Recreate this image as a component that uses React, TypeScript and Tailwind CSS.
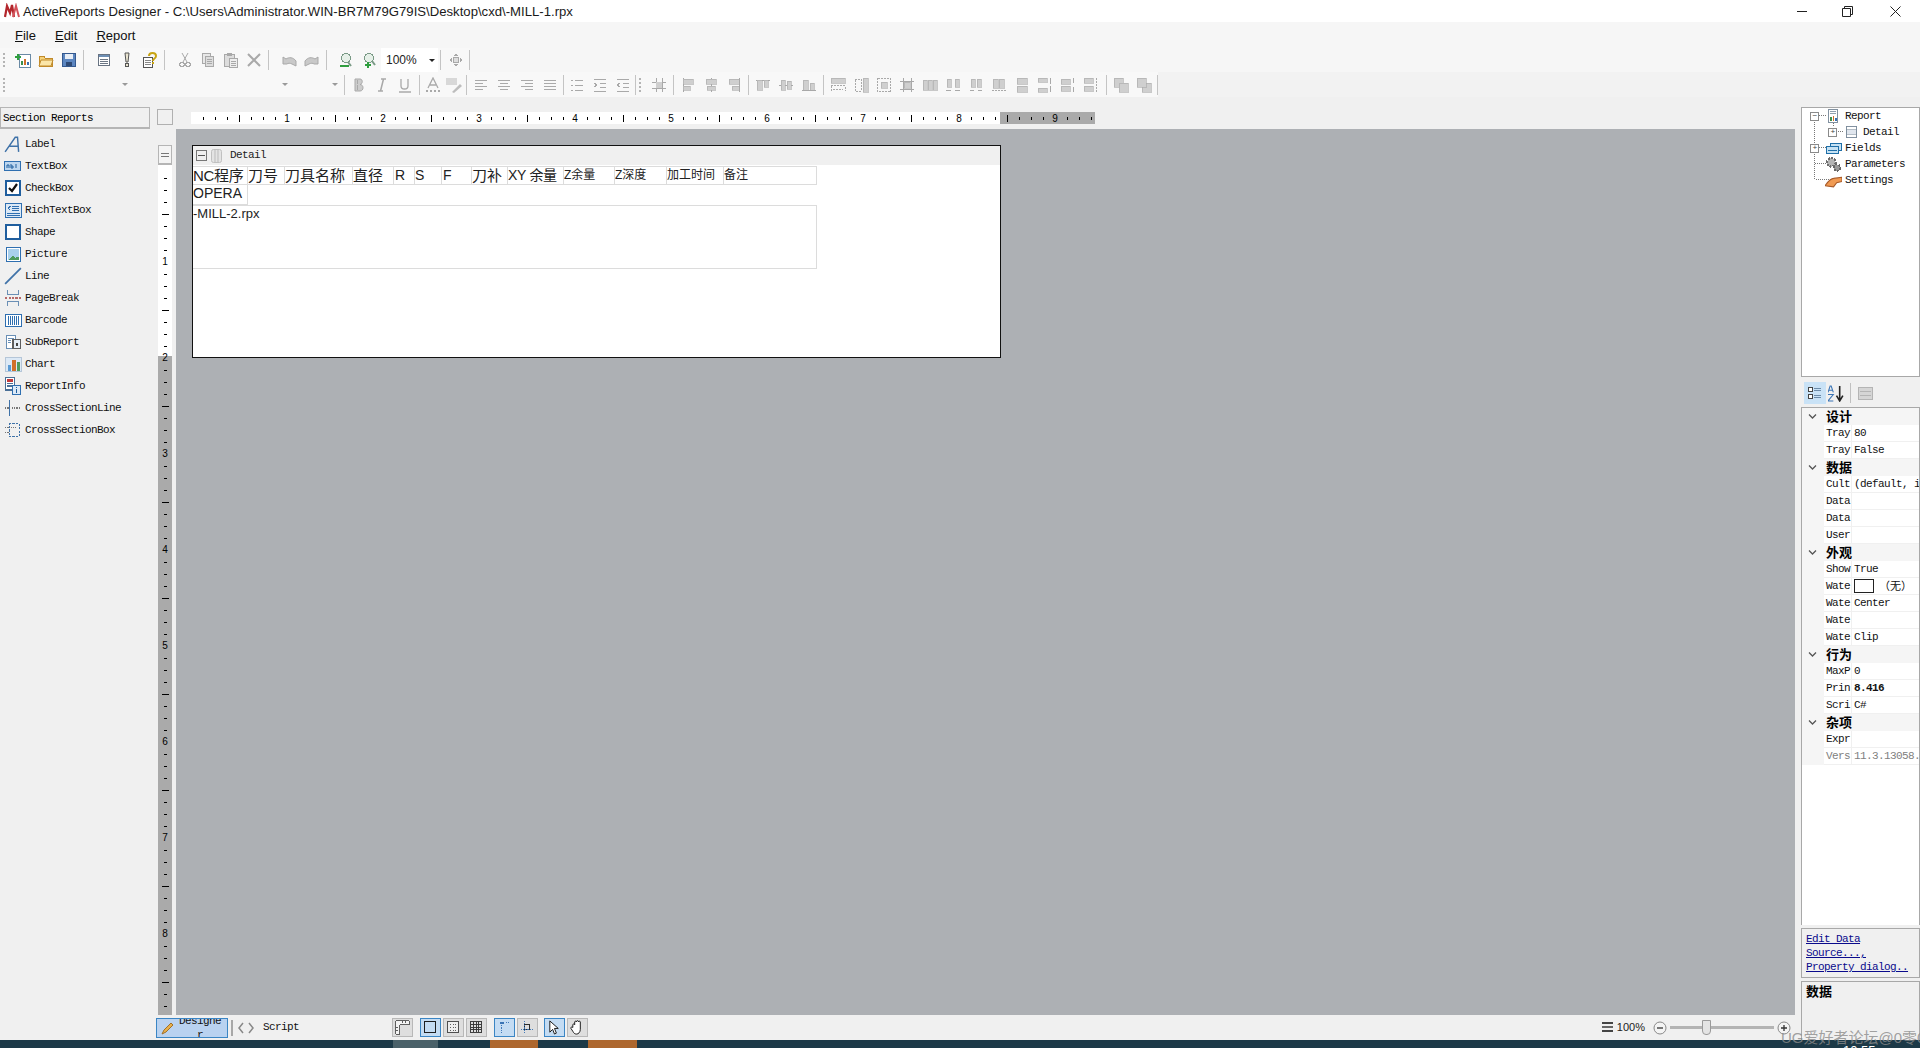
import React from "react";

const mono = "font-['Liberation_Mono','Noto_Sans_CJK_SC',monospace] text-[11px] tracking-[-0.6px]";
const sans = "font-['Liberation_Sans','Noto_Sans_CJK_SC',sans-serif]";
const g = "#a9a9a9"; // disabled stroke
const lg = "#cfcfcf";

type Kids = { children: React.ReactNode };

function Ic({ children, s = 16 }: Kids & { s?: number }) {
  return (
    <svg width={s} height={s} viewBox="0 0 16 16" fill="none" shapeRendering="crispEdges">
      {children}
    </svg>
  );
}

function Bars({ d }: { d: number[][] }) {
  return (
    <>
      {d.map(([a, b, c, e], i) => (
        <rect key={i} x={a} y={b} width={c} height={e} fill={lg} stroke={g} strokeWidth="0.6" />
      ))}
    </>
  );
}

const toolbarIcons: Record<string, React.ReactNode> = {
  new: (
    <Ic>
      <rect x="4" y="2" width="11" height="13" fill="#fff" stroke="#6a8aa5" />
      <rect x="6" y="9" width="2" height="4" fill="#3c8f4c" />
      <rect x="9" y="7" width="2" height="6" fill="#d0702a" />
      <rect x="12" y="10" width="2" height="3" fill="#3a6fb0" />
      <path d="M0 5h6M3 2v6" stroke="#2f9e3f" strokeWidth="2" />
    </Ic>
  ),
  open: (
    <Ic>
      <path d="M1 4h5l1 2h7v8H1z" fill="#f5d27a" stroke="#c08a2a" />
      <path d="M3 8h12l-2 6H1z" fill="#fbe6a8" stroke="#c08a2a" shapeRendering="auto" />
    </Ic>
  ),
  save: (
    <Ic>
      <rect x="1.500" y="1.500" width="13" height="13" fill="#5c86c0" stroke="#34598f" />
      <rect x="4" y="2" width="8" height="5" fill="#e8eef6" />
      <rect x="5" y="10" width="6" height="4" fill="#2f4a75" />
    </Ic>
  ),
  props: (
    <Ic>
      <rect x="2.500" y="2.500" width="11" height="11" fill="#fff" stroke="#687382" />
      <rect x="3" y="3" width="10" height="2" fill="#6d8fb5" />
      <path d="M4 7h8M4 9h8M4 11h8" stroke="#6b7684" />
    </Ic>
  ),
  warn: (
    <Ic>
      <path d="M6 1h4l-1 9H7z" fill="#e9e4d0" stroke="#555" shapeRendering="auto" />
      <circle cx="8" cy="13" r="1.700" fill="#e9e4d0" stroke="#555" />
    </Ic>
  ),
  help: (
    <Ic>
      <rect x="1.500" y="5.500" width="9" height="10" fill="#fff" stroke="#555" />
      <path d="M3 8h6M3 10h6M3 12h6" stroke="#888" />
      <path d="M7 4c0-4 7-4 7 0 0 3-3 2-3 5" stroke="#c8a412" strokeWidth="2" shapeRendering="auto" />
      <rect x="10" y="10" width="2" height="2" fill="#c8a412" />
    </Ic>
  ),
  cut: (
    <Ic>
      <path d="M5 1l5 9M11 1L6 10" stroke={g} shapeRendering="auto" />
      <circle cx="5" cy="12.500" r="2.200" stroke={g} />
      <circle cx="11" cy="12.500" r="2.200" stroke={g} />
    </Ic>
  ),
  copy: (
    <Ic>
      <rect x="2.500" y="1.500" width="8" height="10" fill="#e8e8e8" stroke={g} />
      <rect x="5.500" y="4.500" width="8" height="10" fill="#ddd" stroke={g} />
      <path d="M7 7h5M7 9h5M7 11h5" stroke={g} />
    </Ic>
  ),
  paste: (
    <Ic>
      <rect x="1.500" y="2.500" width="10" height="12" fill="#ddd" stroke={g} />
      <rect x="4" y="1" width="5" height="3" fill={g} />
      <rect x="6.500" y="6.500" width="8" height="9" fill="#eee" stroke={g} />
      <path d="M8 9h5M8 11h5M8 13h5" stroke={g} />
    </Ic>
  ),
  del: (
    <Ic>
      <path d="M2 2l12 12M14 2L2 14" stroke={g} strokeWidth="2" shapeRendering="auto" />
    </Ic>
  ),
  undo: (
    <Ic>
      <path d="M2 12V5l3 2c3-2 7-2 10 2v5l-4-2c-2-1-4-1-5 0z" fill="#c9c9c9" stroke={g} shapeRendering="auto" />
    </Ic>
  ),
  redo: (
    <Ic>
      <path d="M14 12V5l-3 2C8 5 4 5 1 9v5l4-2c2-1 4-1 5 0z" fill="#c9c9c9" stroke={g} shapeRendering="auto" />
    </Ic>
  ),
  zoomOut: (
    <Ic>
      <circle cx="7" cy="6" r="4.500" fill="#e6f0e8" stroke="#7a9a86" />
      <path d="M9 10l3 4" stroke="#7a9a86" strokeWidth="2" shapeRendering="auto" />
      <path d="M1 14h9" stroke="#2f9e3f" strokeWidth="2" />
    </Ic>
  ),
  zoomIn: (
    <Ic>
      <circle cx="7" cy="6" r="4.500" fill="#e6f0e8" stroke="#7a9a86" />
      <path d="M3 13h6M6 10v5.500" stroke="#2f9e3f" strokeWidth="2" />
      <path d="M10 9l3 4" stroke="#7a9a86" strokeWidth="2" shapeRendering="auto" />
    </Ic>
  ),
  move: (
    <Ic>
      <rect x="5.500" y="5.500" width="5" height="5" fill="#ddd" stroke={g} />
      <path d="M8 1l2 3H6zM8 15l2-3H6zM1 8l3-2v4zM15 8l-3-2v4z" fill={g} />
    </Ic>
  ),
  bold: (
    <Ic>
      <path d="M4 2h5c3 0 3 5 0 5.500 4 0 4 6.500 0 6.500H4z M6.500 3v4M6.500 8v5" fill="#ccc" stroke={g} shapeRendering="auto" />
    </Ic>
  ),
  italic: (
    <Ic>
      <path d="M7 2h5M4 14h5M9.500 2l-3 12" stroke={g} strokeWidth="1.500" shapeRendering="auto" />
    </Ic>
  ),
  under: (
    <Ic>
      <path d="M4 2v7c0 4 7 4 7 0V2M2 15h12" stroke={g} strokeWidth="1.300" shapeRendering="auto" />
    </Ic>
  ),
  fcolor: (
    <Ic>
      <path d="M3 11l5-10 5 10M5 8h6" stroke={g} strokeWidth="1.300" shapeRendering="auto" />
      <path d="M1 14h2M5 14h2M9 14h2M13 14h2" stroke={g} strokeWidth="2" />
    </Ic>
  ),
  abc: (
    <Ic>
      <rect x="0" y="1" width="11" height="7" fill="#d8d8d8" />
      <path d="M6 15l8-8 2 2-8 7z" fill="#bdbdbd" shapeRendering="auto" />
    </Ic>
  ),
  aL: <Ic><path d="M2 3h12M2 6h8M2 9h12M2 12h8" stroke={g} /></Ic>,
  aC: <Ic><path d="M2 3h12M4 6h8M2 9h12M4 12h8" stroke={g} /></Ic>,
  aR: <Ic><path d="M2 3h12M6 6h8M2 9h12M6 12h8" stroke={g} /></Ic>,
  aJ: <Ic><path d="M2 3h12M2 6h12M2 9h12M2 12h12" stroke={g} /></Ic>,
  list: <Ic><path d="M2 3h2M2 8h2M2 13h2M6 3h8M6 8h8M6 13h8" stroke={g} /></Ic>,
  indent: <Ic><path d="M2 2h12M8 6h6M8 10h6M2 14h12M2 6l3 2-3 2" stroke={g} /></Ic>,
  outdent: <Ic><path d="M2 2h12M8 6h6M8 10h6M2 14h12M5 6L2 8l3 2" stroke={g} /></Ic>,
  gridAl: <Ic><path d="M1 5h14M1 11h14M5 1v14M11 1v14" stroke={g} /><rect x="5" y="5" width="6" height="6" fill={lg} /></Ic>,
  leftAl: <Ic><path d="M3 1v14" stroke={g} /><Bars d={[[3, 2, 10, 5], [3, 9, 7, 4]]} /></Ic>,
  ctrAl: <Ic><path d="M8 1v14" stroke={g} /><Bars d={[[3, 2, 10, 5], [4, 9, 8, 4]]} /></Ic>,
  rightAl: <Ic><path d="M13 1v14" stroke={g} /><Bars d={[[3, 2, 10, 5], [6, 9, 7, 4]]} /></Ic>,
  topAl: <Ic><path d="M1 3h14" stroke={g} /><Bars d={[[2, 3, 5, 10], [9, 3, 4, 7]]} /></Ic>,
  midAl: <Ic><path d="M1 8h14" stroke={g} /><Bars d={[[3, 3, 4, 10], [9, 4, 4, 8]]} /></Ic>,
  botAl: <Ic><path d="M1 13h14" stroke={g} /><Bars d={[[2, 3, 5, 10], [9, 6, 4, 7]]} /></Ic>,
  sameW: <Ic><Bars d={[[1, 1, 14, 5]]} /><path d="M1 8.500h14V14M1 9v5M3 12h10" stroke={g} strokeDasharray="2 1" /></Ic>,
  sameH: <Ic><Bars d={[[10, 1, 5, 14]]} /><path d="M2 2h6v12H2z" stroke={g} strokeDasharray="2 1" /></Ic>,
  sameS: <Ic><path d="M1.500 1.500h13v13h-13z" stroke={g} strokeDasharray="2 1" /><Bars d={[[5, 5, 6, 6]]} /></Ic>,
  gridSz: <Ic><path d="M1 4h14M1 12h14M4 1v14M12 1v14" stroke={g} /><Bars d={[[5, 5, 6, 6]]} /></Ic>,
  hEq: <Ic><Bars d={[[1, 3, 4, 10], [6, 3, 4, 10], [11, 3, 4, 10]]} /></Ic>,
  hInc: <Ic><Bars d={[[2, 2, 4, 8], [10, 2, 4, 8]]} /><path d="M1 13h5M10 13h5" stroke={g} /></Ic>,
  hDec: <Ic><Bars d={[[3, 2, 4, 8], [9, 2, 4, 8]]} /><path d="M2 13h4M10 13h4" stroke={g} /></Ic>,
  hRem: <Ic><Bars d={[[2, 2, 5, 9], [8, 2, 5, 9]]} /><path d="M1 13h14" stroke={g} strokeDasharray="2 1" /></Ic>,
  vEq: <Ic><Bars d={[[3, 1, 10, 6], [3, 9, 10, 6]]} /></Ic>,
  vInc: <Ic><Bars d={[[1, 1, 9, 4], [1, 11, 9, 4]]} /><path d="M13 1v6M13 9v6" stroke={g} /></Ic>,
  vDec: <Ic><Bars d={[[1, 2, 9, 5], [1, 9, 9, 5]]} /><path d="M13 1v5M13 10v5" stroke={g} /></Ic>,
  vRem: <Ic><Bars d={[[1, 1, 9, 5], [1, 9, 9, 5]]} /><path d="M13 1v14" stroke={g} strokeDasharray="2 1" /></Ic>,
  front: <Ic><Bars d={[[1, 1, 9, 9], [6, 6, 9, 9]]} /></Ic>,
  back: <Ic><Bars d={[[6, 6, 9, 9], [1, 1, 9, 9]]} /></Ic>,
};

function Tb({ n, c = "" }: { n: string; c?: string }) {
  return <div className={`flex h-full w-[23px] shrink-0 items-center justify-center ${c}`}>{toolbarIcons[n]}</div>;
}

function Sep({ w }: { w: string }) {
  return (
    <div className={`flex h-full shrink-0 items-center ${w}`}>
      <div className="h-[20px] w-px bg-[#c4c4c4]" />
    </div>
  );
}

function Grip() {
  return (
    <div className="flex h-full w-[11px] shrink-0 flex-col items-center justify-center gap-[2px] pl-[3px] pr-[6px]">
      {[0, 1, 2, 3].map((i) => (
        <div key={i} className="h-[2px] w-[2px] bg-[#b4b4b4]" />
      ))}
    </div>
  );
}

function Arrow() {
  return <div className="h-0 w-0 border-x-[3px] border-t-[3px] border-x-transparent border-t-[#9a9a9a]" />;
}

function TitleBar() {
  return (
    <div className="flex h-[22px] items-center bg-white pl-[4px]">
      <svg width="16" height="16" viewBox="0 0 16 16" className="mr-[3px]">
        <path d="M1 14l2-11 3 7 2-8 2 12" stroke="#b3262c" strokeWidth="2.200" fill="none" />
        <path d="M9 14l3-11 3 11" stroke="#d4525a" strokeWidth="2" fill="none" />
      </svg>
      <span className={`${sans} pt-[1px] text-[13.15px] text-[#1a1a1a]`}>
        ActiveReports Designer - C:\Users\Administrator.WIN-BR7M79G79IS\Desktop\cxd\-MILL-1.rpx
      </span>
      <div className="ml-auto flex items-center">
        <div className="flex w-[45px] justify-center">
          <svg width="11" height="11" viewBox="0 0 11 11">
            <path d="M0 5.500h10" stroke="#222" />
          </svg>
        </div>
        <div className="flex w-[45px] justify-center">
          <svg width="11" height="11" viewBox="0 0 11 11" fill="none">
            <path d="M.5 2.500h8v8h-8zM2.500 2.500v-2h8v8h-2" stroke="#222" />
          </svg>
        </div>
        <div className="flex w-[50px] justify-center">
          <svg width="11" height="11" viewBox="0 0 11 11">
            <path d="M.5.500l10 10M10.500.500l-10 10" stroke="#222" />
          </svg>
        </div>
      </div>
    </div>
  );
}

function MenuBar() {
  return (
    <div className={`flex h-[26px] items-center gap-[19px] bg-[#f6f6f6] pl-[15px] pt-[2px] ${sans} text-[13px] text-[#111]`}>
      <span>
        <u>F</u>ile
      </span>
      <span>
        <u>E</u>dit
      </span>
      <span>
        <u>R</u>eport
      </span>
    </div>
  );
}

function ToolbarOne() {
  return (
    <div className="flex h-[24px] bg-[#f6f6f6]">
      <div className="flex h-full w-[470px] items-center bg-[#f8f8f8]">
        <Grip />
        <Tb n="new" />
        <Tb n="open" />
        <Tb n="save" />
        <Sep w="w-[12px] pl-[3px]" />
        <Tb n="props" />
        <Tb n="warn" />
        <Tb n="help" />
        <Sep w="w-[12px] pl-[3px]" />
        <Tb n="cut" />
        <Tb n="copy" />
        <Tb n="paste" />
        <Tb n="del" />
        <Sep w="w-[12px] pl-[3px]" />
        <Tb n="undo" />
        <Tb n="redo" />
        <Sep w="w-[12px] pl-[3px]" />
        <Tb n="zoomOut" />
        <Tb n="zoomIn" />
        <div className={`flex h-full w-[57px] shrink-0 items-center bg-white pl-[5px] ${sans} text-[12px] text-[#222]`}>
          100%
          <div className="ml-[12px]">
            <div className="h-0 w-0 border-x-[3px] border-t-[3px] border-x-transparent border-t-[#222]" />
          </div>
        </div>
        <Sep w="w-[6px] pl-[2px]" />
        <Tb n="move" />
        <Sep w="w-[3px] pl-[2px]" />
      </div>
    </div>
  );
}

function ToolbarTwo() {
  return (
    <div className="flex h-[25px] bg-[#f2f2f2]">
      <div className="flex h-full w-[1158px] items-center bg-[#f8f8f8]">
        <Grip />
        <div className="flex h-full w-[119px] shrink-0 items-center justify-end pr-[2px]">
          <Arrow />
        </div>
        <div className="flex h-full w-[160px] shrink-0 items-center justify-end pr-[2px]">
          <Arrow />
        </div>
        <div className="flex h-full w-[50px] shrink-0 items-center justify-end pr-[2px]">
          <Arrow />
        </div>
        <Sep w="w-[7px] pl-[4px]" />
        <Tb n="bold" />
        <Tb n="italic" />
        <Tb n="under" />
        <Sep w="w-[5px] pl-[3px]" />
        <Tb n="fcolor" />
        <Tb n="abc" c="-ml-[2px]" />
        <Sep w="w-[4px] pl-[1px]" />
        <Tb n="aL" />
        <Tb n="aC" />
        <Tb n="aR" />
        <Tb n="aJ" />
        <Sep w="w-[4px] pl-[2px]" />
        <Tb n="list" />
        <Tb n="indent" />
        <Tb n="outdent" />
        <Sep w="w-[2px] pl-[1px]" />
        <Grip />
        <Tb n="gridAl" />
        <Sep w="w-[6px] pl-[3px]" />
        <Tb n="leftAl" />
        <Tb n="ctrAl" />
        <Tb n="rightAl" />
        <Sep w="w-[6px] pl-[3px]" />
        <Tb n="topAl" />
        <Tb n="midAl" />
        <Tb n="botAl" />
        <Sep w="w-[6px] pl-[3px]" />
        <Tb n="sameW" />
        <Tb n="sameH" />
        <Tb n="sameS" />
        <Tb n="gridSz" />
        <Tb n="hEq" />
        <Tb n="hInc" />
        <Tb n="hDec" />
        <Tb n="hRem" />
        <Tb n="vEq" />
        <Tb n="vInc" />
        <Tb n="vDec" />
        <Tb n="vRem" />
        <Sep w="w-[7px] pl-[4px]" />
        <Tb n="front" />
        <Tb n="back" />
        <Sep w="w-[3px] pl-[2px]" />
      </div>
    </div>
  );
}

const toolboxIcons: Record<string, React.ReactNode> = {
  Label: (
    <Ic s={18}>
      <path d="M1 15L10 2h2l1 13M5 10h7" stroke="#3f72a8" strokeWidth="1.300" shapeRendering="auto" />
    </Ic>
  ),
  TextBox: (
    <svg width="18" height="12" viewBox="0 0 18 12">
      <rect x=".5" y="1.500" width="16" height="9" fill="#bcd6ef" stroke="#2f6fb0" />
      <path d="M3 8V5h2v3M7 4v4h2V6H7M12 4v4" stroke="#1f5e9e" fill="none" />
    </svg>
  ),
  CheckBox: (
    <Ic s={16}>
      <rect x="1" y="1" width="14" height="14" fill="#fff" stroke="#1f5e9e" strokeWidth="2" />
      <path d="M4 8l3 3 5-7" stroke="#111" strokeWidth="2.200" shapeRendering="auto" />
    </Ic>
  ),
  RichTextBox: (
    <Ic s={17}>
      <rect x=".5" y="1.500" width="15" height="13" fill="#dce9f6" stroke="#2f6fb0" />
      <path d="M5 4L3 6l2 2M7 4h6M7 6h6M7 8h6M2 11h12M2 13h12" stroke="#2f6fb0" />
    </Ic>
  ),
  Shape: (
    <Ic s={16}>
      <rect x="1" y="1" width="14" height="14" fill="#fff" stroke="#1f5e9e" strokeWidth="2" />
    </Ic>
  ),
  Picture: (
    <Ic s={17}>
      <rect x="1" y="1" width="14" height="14" fill="#fff" stroke="#2f6fb0" />
      <rect x="3" y="3" width="10" height="10" fill="#a9d0ec" />
      <path d="M3 13l4-4 3 2 3-1v3z" fill="#4e9a5b" />
    </Ic>
  ),
  Line: (
    <Ic s={18}>
      <path d="M1 15L15 1" stroke="#3f72a8" strokeWidth="1.500" shapeRendering="auto" />
    </Ic>
  ),
  PageBreak: (
    <Ic s={18}>
      <path d="M3 1v4h10V1M3 15v-4h10v4" stroke="#6a8fb5" />
      <path d="M1 8h14" stroke="#b56a6a" strokeDasharray="2 1" />
    </Ic>
  ),
  Barcode: (
    <Ic s={17}>
      <rect x=".5" y="2.500" width="15" height="11" fill="#fff" stroke="#2f6fb0" />
      <path d="M3 4v8M5 4v8M7 4v8M9 4v8M11 4v8M13 4v8" stroke="#2f6fb0" />
    </Ic>
  ),
  SubReport: (
    <Ic s={17}>
      <rect x="1.500" y="1.500" width="8" height="12" fill="#fff" stroke="#6a8fb5" />
      <rect x="7.500" y="5.500" width="7" height="8" fill="#e6eef6" stroke="#5d5d5d" />
      <path d="M3 4h5M3 6h3M3 8h3" stroke="#6a8fb5" />
      <rect x="10" y="8" width="2" height="3" fill="#444" />
    </Ic>
  ),
  Chart: (
    <Ic s={17}>
      <rect x=".5" y="1.500" width="15" height="13" fill="#dce9f6" stroke="#b5c6d8" />
      <rect x="3" y="8" width="3" height="6" fill="#5a9bd5" />
      <rect x="7" y="4" width="3" height="10" fill="#d0702a" />
      <rect x="11" y="6" width="3" height="8" fill="#4e9a5b" />
    </Ic>
  ),
  ReportInfo: (
    <Ic s={18}>
      <rect x="1.500" y=".5" width="8" height="11" fill="#fff" stroke="#4a6f96" />
      <path d="M3 3h5" stroke="#c03a3a" strokeWidth="2" />
      <path d="M3 6h5M3 8h5" stroke="#4a6f96" />
      <rect x="7.500" y="7.500" width="7" height="8" fill="#dce9f6" stroke="#2f6fb0" />
      <path d="M11 9v1M11 11v3" stroke="#1f5e9e" />
    </Ic>
  ),
  CrossSectionLine: (
    <Ic s={18}>
      <path d="M5 1v14" stroke="#3f72a8" />
      <path d="M1 8h3M7 8h8" stroke="#777" strokeDasharray="1 1" />
    </Ic>
  ),
  CrossSectionBox: (
    <Ic s={18}>
      <rect x="4.500" y="2.500" width="9" height="11" stroke="#3f72a8" strokeDasharray="2 1" />
      <path d="M1 6h3M1 10h3M6 6h6" stroke="#777" strokeDasharray="1 1" />
    </Ic>
  ),
};

function Toolbox() {
  return (
    <div className="flex w-[157px] shrink-0 flex-col pt-[10px]">
      <div className={`mb-[4px] flex h-[22px] w-[150px] items-center border border-[#b5b5b5] border-b-2 pl-[2px] pt-[2px] ${mono} text-black`}>
        Section Reports
      </div>
      {Object.keys(toolboxIcons).map((name) => (
        <div key={name} className={`flex h-[22px] items-center ${mono} text-[#111]`}>
          <div className="flex w-[25px] shrink-0 items-center justify-center pl-[1px]">{toolboxIcons[name]}</div>
          {name}
        </div>
      ))}
    </div>
  );
}

function HRuler() {
  const cells = Array.from({ length: 75 }, (_, i) => i + 1);
  return (
    <div className="flex h-[16px] items-center">
      <div className="h-[16px] w-[16px] shrink-0 border border-[#b0b0b0]" />
      <div className="ml-[18px] mt-[2px] flex h-[12px] w-[904px] overflow-hidden bg-[linear-gradient(to_right,#fff_809px,#aaa_809px)] pl-[6px]">
        {cells.map((k) => (
          <div key={k} className={`flex h-full w-[12px] shrink-0 items-center justify-center ${sans} text-[10px] text-black`}>
            {k % 8 === 0 ? k / 8 : <div className={`w-px bg-black ${k % 4 === 0 ? "h-[7px]" : "h-[3px]"}`} />}
          </div>
        ))}
      </div>
    </div>
  );
}

function VRuler() {
  const cells = Array.from({ length: 71 }, (_, i) => i + 1);
  return (
    <div className="flex h-full w-[14px] shrink-0 flex-col overflow-hidden">
      <div className="h-[36px] shrink-0 pt-[16px]">
        <div className="flex h-[20px] flex-col items-center justify-center gap-[2px] border border-[#b5b5b5] border-b-2 bg-[#f4f4f4]">
          <div className="h-px w-[8px] bg-[#777]" />
          <div className="h-px w-[8px] bg-[#777]" />
        </div>
      </div>
      <div className="flex-1 bg-[linear-gradient(to_bottom,#fff_191px,#aaa_191px)] pt-[7px]">
        {cells.map((k) => (
          <div key={k} className={`flex h-[12px] items-center justify-center ${sans} text-[10px] leading-none text-black`}>
            {k % 8 === 0 ? k / 8 : <div className={`h-px bg-black ${k % 4 === 0 ? "w-[7px]" : "w-[3px]"}`} />}
          </div>
        ))}
      </div>
    </div>
  );
}

// report controls keep their own x/y on the design surface, as in the .rpx
const headerCells = [
  { l: 0, w: 55, t: "NC程序", c: "text-[15px] tracking-[-0.3px]" },
  { l: 55, w: 37, t: "刀号", c: "text-[15px]" },
  { l: 92, w: 68, t: "刀具名称", c: "text-[15px]" },
  { l: 160, w: 41, t: "直径", c: "text-[15px]" },
  { l: 201, w: 21, t: "R", c: "text-[14px] pl-[1px]" },
  { l: 222, w: 27, t: "S", c: "text-[14px]" },
  { l: 249, w: 30, t: "F", c: "text-[14px] pl-[1px]" },
  { l: 279, w: 36, t: "刀补", c: "text-[15px]" },
  { l: 315, w: 56, t: "XY 余量", c: "text-[14px] tracking-[-0.3px]" },
  { l: 371, w: 51, t: "Z余量", c: "text-[12px]" },
  { l: 422, w: 52, t: "Z深度", c: "text-[12px]" },
  { l: 474, w: 57, t: "加工时间", c: "text-[12px]" },
  { l: 531, w: 93, t: "备注", c: "text-[12px]" },
];

function DesignSurface() {
  return (
    <div className="relative h-[213px] w-[809px] border border-[#111] bg-white">
      <div className={`flex h-[19px] items-center gap-[3px] bg-[#f0f0f0] pl-[3px] ${mono} text-[#222]`}>
        <div className="flex h-[11px] w-[11px] items-center justify-center border border-[#777]">
          <div className="h-px w-[7px] bg-[#555]" />
        </div>
        <svg width="13" height="16" viewBox="0 0 13 16" fill="none">
          <rect x="1.500" y="1.500" width="10" height="13" rx="2" fill="#e4e4e4" stroke="#c0c0c0" />
          <path d="M5 2v12M8 2v12" stroke="#bbb" />
        </svg>
        <span className="ml-[4px]">Detail</span>
      </div>
      <div className={`${sans} text-[#222]`}>
        {headerCells.map((c) => (
          <div
            key={c.l}
            style={{ left: c.l, width: c.w }}
            className={`absolute top-[20px] h-[19px] overflow-hidden whitespace-nowrap border border-l-0 border-[#dcdcdc] leading-[17px] ${c.c}`}
          >
            {c.t}
          </div>
        ))}
        <div className="absolute left-0 top-[39px] h-[20px] w-[55px] overflow-hidden border-r border-b border-[#dcdcdc] text-[14px] leading-[17px]">
          OPERA TIME
        </div>
        <div className="absolute left-0 top-[59px] h-[64px] w-[624px] border border-l-0 border-[#dcdcdc] bg-white text-[13px] leading-[16px]">
          -MILL-2.rpx
        </div>
      </div>
    </div>
  );
}

function TreeRow({ indent, box, icon, label }: { indent: string; box?: "+" | "-"; icon: React.ReactNode; label: string }) {
  return (
    <div className={`flex h-[16px] items-center ${indent} ${mono} text-[#111]`}>
      <div className="flex w-[15px] shrink-0 items-center">
        {box && (
          <div className="flex h-[9px] w-[9px] items-center justify-center border border-[#8a8a8a] bg-white text-[8px] leading-none text-[#444]">
            {box === "+" ? "+" : "−"}
          </div>
        )}
      </div>
      <div className="flex w-[17px] shrink-0 justify-center">{icon}</div>
      <span className="ml-[3px]">{label}</span>
    </div>
  );
}

function Tree() {
  return (
    <div className="relative h-[270px] border border-[#a8a8a8] bg-white">
      <svg className="absolute left-[7px] top-[7px]" width="50" height="80" fill="none" shapeRendering="crispEdges">
        <path d="M5.500 5v59h18M5.500 48.500h18M10 .5h8M10 32.500h8M24.500 8v4M29 16.500h6" stroke="#777" strokeDasharray="1 1" />
      </svg>
      <div className="relative">
        <TreeRow
          indent="pl-[8px]"
          box="-"
          label="Report"
          icon={
            <Ic s={15}>
              <rect x="2.500" y=".5" width="10" height="14" fill="#fff" stroke="#7a8a9a" />
              <path d="M4 3h7M4 5h7" stroke="#8a9aaa" />
              <rect x="4" y="9" width="2" height="4" fill="#3c8f4c" />
              <rect x="7" y="7" width="2" height="6" fill="#d0702a" />
              <rect x="10" y="10" width="2" height="3" fill="#3a6fb0" />
            </Ic>
          }
        />
        <TreeRow
          indent="pl-[26px]"
          box="+"
          label="Detail"
          icon={
            <Ic s={15}>
              <path d="M2.500 1.500h11v12h-11z" fill="#fff" stroke="#7a8a9a" />
              <rect x="3" y="5" width="10" height="5" fill="#e0e6ee" stroke="#7a8a9a" strokeWidth=".6" />
            </Ic>
          }
        />
        <TreeRow
          indent="pl-[8px]"
          box="+"
          label="Fields"
          icon={
            <Ic s={17}>
              <rect x="5" y="3.500" width="11" height="6" fill="#c6e2f4" stroke="#1f6fa8" />
              <rect x="1" y="6.500" width="12" height="6" fill="#c6e2f4" stroke="#1f6fa8" />
              <path d="M3 10h8" stroke="#1f6fa8" />
            </Ic>
          }
        />
        <TreeRow
          indent="pl-[8px]"
          label="Parameters"
          icon={
            <Ic s={17}>
              <circle cx="6" cy="6" r="4" fill="#b5b5b5" stroke="#6d6d6d" strokeWidth="2" strokeDasharray="2 1" />
              <circle cx="11.500" cy="11" r="3" fill="#999" stroke="#666" strokeWidth="1.500" strokeDasharray="2 1" />
            </Ic>
          }
        />
        <TreeRow
          indent="pl-[8px]"
          label="Settings"
          icon={
            <Ic s={17}>
              <path d="M0 13c3-4 5-7 8-7l8-1v4l-5 1-3 4z" fill="#f09a52" stroke="#a85a28" shapeRendering="auto" />
            </Ic>
          }
        />
      </div>
    </div>
  );
}

type Prop =
  | { cat: string }
  | { n?: string; v?: React.ReactNode; c?: string };

const props: Prop[] = [
  { cat: "设计" },
  { n: "Tray", v: "80" },
  { n: "Tray", v: "False" },
  { cat: "数据" },
  { n: "Cult", v: "(default, i" },
  { n: "Data" },
  { n: "Data" },
  { n: "User" },
  { cat: "外观" },
  { n: "Show", v: "True" },
  {
    n: "Wate",
    v: (
      <span className="flex items-center">
        <span className="h-[14px] w-[20px] border border-[#222] bg-white" />
        <span className={`ml-[5px] ${sans} text-[11px] tracking-normal`}>（无）</span>
      </span>
    ),
  },
  { n: "Wate", v: "Center" },
  { n: "Wate" },
  { n: "Wate", v: "Clip" },
  { cat: "行为" },
  { n: "MaxP", v: "0" },
  { n: "Prin", v: <b>8.416</b> },
  { n: "Scri", v: "C#" },
  { cat: "杂项" },
  { n: "Expr" },
  { n: "Vers", v: "11.3.13058.", c: "text-[#808080]" },
];

function PropGrid() {
  return (
    <div className="flex-1 overflow-hidden border-t border-x border-[#a8a8a8] bg-white">
      {props.map((p, i) =>
        "cat" in p ? (
          <div key={i} className="flex h-[17px] items-center bg-[#f5f5f5]">
            <div className="flex w-[20px] shrink-0 justify-center">
              <svg width="9" height="7" viewBox="0 0 9 7" fill="none">
                <path d="M1 1.500l3.500 3.500L8 1.500" stroke="#555" strokeWidth="1.300" />
              </svg>
            </div>
            <span className={`pl-[4px] ${sans} text-[13px] font-bold text-black`}>{p.cat}</span>
          </div>
        ) : (
          <div key={i} className={`flex h-[17px] items-center ${mono} ${p.c ?? "text-[#111]"}`}>
            <div className="h-full w-[22px] shrink-0 bg-[#f5f5f5]" />
            <div className="flex h-full w-[28px] shrink-0 items-center overflow-hidden whitespace-nowrap border-r border-b border-[#f0f0f0] pl-[2px]">
              {p.n}
            </div>
            <div className="flex h-full flex-1 items-center overflow-hidden whitespace-nowrap border-b border-[#f0f0f0] pl-[2px]">
              {p.v}
            </div>
          </div>
        )
      )}
    </div>
  );
}

function RightPanel() {
  return (
    <div className="flex w-[125px] shrink-0 flex-col pl-[6px] pt-[10px]">
      <Tree />
      <div className="flex h-[30px] shrink-0 items-center pl-[3px] pt-[2px]">
        <div className="flex h-[22px] w-[22px] items-center justify-center bg-[#c9e2f6]">
          <Ic s={16}>
            <rect x="1.500" y="2.500" width="4" height="4" fill="#fff" stroke="#444" />
            <rect x="1.500" y="9.500" width="4" height="4" fill="#fff" stroke="#444" />
            <path d="M7 3h7M7 5h7M7 10h7M7 12h7" stroke="#6b8aa8" />
          </Ic>
        </div>
        <div className="flex h-[22px] w-[20px] items-center justify-center">
          <Ic s={17}>
            <path d="M5 7l-2-6h-1L0 7M1 5h3M0 9h5l-5 6h5" stroke="#3a74b5" shapeRendering="auto" />
            <path d="M11 1v13M8 10l3 5 3-5" stroke="#222" strokeWidth="1.500" shapeRendering="auto" />
          </Ic>
        </div>
        <div className="ml-[4px] h-[20px] w-px bg-[#c0c0c0]" />
        <div className="ml-[6px]">
          <Ic s={17}>
            <rect x="1" y="2" width="14" height="12" fill="#d5d5d5" stroke="#b4b4b4" />
            <path d="M3 6h10M3 10h10" stroke="#b4b4b4" />
          </Ic>
        </div>
      </div>
      <PropGrid />
      <div className={`mt-[3px] h-[50px] shrink-0 border border-[#a8a8a8] px-[4px] py-[3px] ${mono} leading-[14px] text-[#0a0a8c] underline`}>
        <div>Edit Data</div>
        <div>Source...,</div>
        <div>Property dialog..</div>
      </div>
      <div className={`mt-[3px] h-[59px] shrink-0 border border-b-0 border-[#a8a8a8] pl-[4px] ${sans} text-[13px] font-bold text-black`}>
        数据
      </div>
    </div>
  );
}

function StatusIcon({ active, children }: Kids & { active?: boolean }) {
  return (
    <div
      className={`flex h-[19px] w-[21px] shrink-0 items-center justify-center border ${
        active ? "border-[#3a85c4] bg-[#c4dcf3]" : "border-[#b8b8b8] bg-[#dedede]"
      }`}
    >
      {children}
    </div>
  );
}

function BottomBar() {
  return (
    <div className="flex h-[25px] shrink-0 items-center">
      <div className="w-[156px] shrink-0" />
      <div className={`flex h-[20px] w-[72px] shrink-0 items-center overflow-hidden border border-[#3a85c4] bg-[#b9d2f0] ${mono} text-[#111]`}>
        <svg width="14" height="14" viewBox="0 0 14 14" className="ml-[4px] shrink-0">
          <path d="M1 13l2-4 7-7 2 2-7 7z" fill="#e8b04a" stroke="#a0702a" />
        </svg>
        <div className="ml-[3px] w-[44px] shrink-0 text-center leading-[14px] break-all">Designer</div>
      </div>
      <div className="ml-[3px] h-[16px] w-[2px] bg-[#a8a8a8]" />
      <svg width="16" height="12" viewBox="0 0 16 12" fill="none" className="ml-[5px]">
        <path d="M5 1L1 6l4 5M11 1l4 5-4 5" stroke="#888" strokeWidth="1.500" />
      </svg>
      <span className={`ml-[9px] ${mono} text-[#111]`}>Script</span>
      <div className="ml-[93px] flex items-center gap-[2px]">
        <StatusIcon>
          <Ic s={15}>
            <path d="M1 1h14v4H5v10H1z" fill="#f4f4f4" stroke="#555" />
            <path d="M8 1v2M11 1v2M1 8h2M1 11h2" stroke="#555" />
          </Ic>
        </StatusIcon>
        <div className="w-[3px]" />
        <StatusIcon active>
          <Ic s={15}>
            <rect x="1.500" y="1.500" width="12" height="12" stroke="#111" />
          </Ic>
        </StatusIcon>
        <StatusIcon>
          <Ic s={15}>
            <rect x="1.500" y="1.500" width="12" height="12" stroke="#444" fill="#eee" />
            <path d="M4 5h8M4 8h8M4 11h8" stroke="#555" strokeDasharray="1 2" />
          </Ic>
        </StatusIcon>
        <StatusIcon>
          <Ic s={15}>
            <rect x="1.500" y="1.500" width="12" height="12" stroke="#333" />
            <path d="M4.500 2v11M7.500 2v11M10.500 2v11M2 4.500h11M2 7.500h11M2 10.500h11" stroke="#333" />
          </Ic>
        </StatusIcon>
        <div className="w-[3px]" />
        <StatusIcon active>
          <Ic s={15}>
            <path d="M5 3v11M6 3h8" stroke="#3a74b5" strokeDasharray="1 1" />
            <path d="M3 3h4" stroke="#3a74b5" strokeWidth="2" />
          </Ic>
        </StatusIcon>
        <StatusIcon>
          <Ic s={15}>
            <rect x="4.500" y="4.500" width="6" height="6" stroke="#222" />
            <path d="M1 10h14M5 1v14" stroke="#3a74b5" strokeDasharray="1 1" />
          </Ic>
        </StatusIcon>
        <div className="w-[2px]" />
        <StatusIcon active>
          <Ic s={15}>
            <path d="M3 1l9 8H8l2 5-2 1-2-5-3 3z" fill="#fff" stroke="#111" shapeRendering="auto" />
          </Ic>
        </StatusIcon>
        <StatusIcon>
          <Ic s={15}>
            <path d="M3 8V5c0-1 2-1 2 0V2c0-1 2-1 2 0v-.5c0-1 2-1 2 0V2c0-1 2-1 2 0v8c0 3-2 5-4 5s-3-1-4-3L1 9c-1-1 1-2 2-1z" fill="#fff" stroke="#111" shapeRendering="auto" />
          </Ic>
        </StatusIcon>
      </div>
      <div className="ml-auto flex items-center pr-[4px]">
        <Ic s={13}>
          <rect x="1" y="1" width="14" height="3" fill="#444" />
          <rect x="1" y="6" width="14" height="3" fill="#666" />
          <rect x="1" y="11" width="14" height="3" fill="#444" />
        </Ic>
        <span className={`ml-[3px] ${sans} text-[11px] text-[#222]`}>100%</span>
        <svg width="14" height="14" viewBox="0 0 14 14" fill="none" className="ml-[8px]">
          <circle cx="7" cy="7" r="6" stroke="#888" fill="#f4f4f4" />
          <path d="M4 7h6" stroke="#333" strokeWidth="1.300" />
        </svg>
        <div className="relative ml-[3px] h-[3px] w-[104px] bg-[#b4b4b4]">
          <div className="absolute left-[32px] top-[-6px] h-[15px] w-[9px] rounded-b-[4px] border border-[#9a9a9a] bg-[#e4e4e4]" />
        </div>
        <svg width="14" height="14" viewBox="0 0 14 14" fill="none" className="ml-[3px]">
          <circle cx="7" cy="7" r="6" stroke="#888" fill="#f4f4f4" />
          <path d="M4 7h6M7 4v6" stroke="#333" strokeWidth="1.300" />
        </svg>
      </div>
    </div>
  );
}

function Taskbar() {
  return (
    <div className="flex h-[8px] shrink-0 overflow-hidden bg-[#1c3947]">
      <div className="ml-[393px] h-full w-[45px] bg-[#4a6169]" />
      <div className="ml-[52px] h-full w-[48px] bg-[#ad672e]" />
      <div className="ml-[50px] h-full w-[49px] bg-[#ad672e]" />
      <div className={`ml-[1206px] pt-[4px] ${sans} text-[13px] leading-none text-white`}>10:55</div>
    </div>
  );
}

export default function App() {
  return (
    <div className="relative flex h-[1048px] w-[1920px] flex-col overflow-hidden bg-[#f0f0f0]">
      <TitleBar />
      <MenuBar />
      <ToolbarOne />
      <ToolbarTwo />
      <div className="flex min-h-0 flex-1">
        <div className="flex min-w-0 flex-1 flex-col">
          <div className="flex min-h-0 flex-1">
            <Toolbox />
            <div className="flex min-w-0 flex-1 flex-col pt-[12px]">
              <HRuler />
              <div className="mt-[4px] flex min-h-0 flex-1 pl-[1px]">
                <VRuler />
                <div className="ml-[4px] flex-1 bg-[#adb0b4] pl-[16px] pt-[16px]">
                  <DesignSurface />
                </div>
              </div>
            </div>
          </div>
          <BottomBar />
        </div>
        <RightPanel />
      </div>
      <Taskbar />
      <div className={`absolute bottom-[3px] left-[1781px] ${sans} whitespace-nowrap text-[15px] leading-none text-[#8a8a8a]/80`}>
        UG爱好者论坛@0零0
      </div>
    </div>
  );
}
